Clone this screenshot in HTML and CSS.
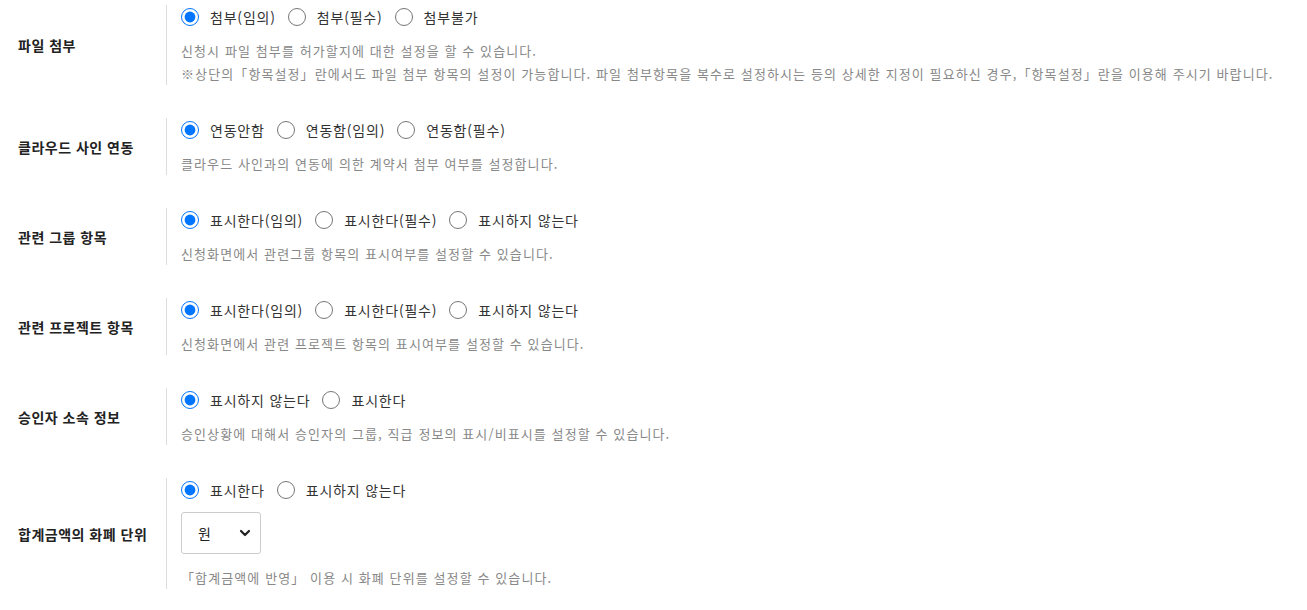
FILE: index.html
```html
<!DOCTYPE html>
<html lang="ko">
<head>
    <meta charset="UTF-8">
    <meta name="viewport" content="width=device-width, initial-scale=1.0">
    <title>신청 설정</title>
    <link rel="stylesheet" href="styles.css">
</head>
<body>
    <div class="settings">
        <!-- 파일 첨부 -->
        <div class="setting-row">
            <div class="setting-label">파일 첨부</div>
            <div class="setting-body">
                <div class="radio-group">
                    <label class="radio"><input type="radio" name="attach" checked>첨부(임의)</label>
                    <label class="radio"><input type="radio" name="attach">첨부(필수)</label>
                    <label class="radio"><input type="radio" name="attach">첨부불가</label>
                </div>
                <p class="setting-desc">신청시 파일 첨부를 허가할지에 대한 설정을 할 수 있습니다.<br>※상단의「항목설정」란에서도 파일 첨부 항목의 설정이 가능합니다. 파일 첨부항목을 복수로 설정하시는 등의 상세한 지정이 필요하신 경우,「항목설정」란을 이용해 주시기 바랍니다.</p>
            </div>
        </div>

        <!-- 클라우드 사인 연동 -->
        <div class="setting-row">
            <div class="setting-label">클라우드 사인 연동</div>
            <div class="setting-body">
                <div class="radio-group">
                    <label class="radio"><input type="radio" name="cloudsign" checked>연동안함</label>
                    <label class="radio"><input type="radio" name="cloudsign">연동함(임의)</label>
                    <label class="radio"><input type="radio" name="cloudsign">연동함(필수)</label>
                </div>
                <p class="setting-desc">클라우드 사인과의 연동에 의한 계약서 첨부 여부를 설정합니다.</p>
            </div>
        </div>

        <!-- 관련 그룹 항목 -->
        <div class="setting-row">
            <div class="setting-label">관련 그룹 항목</div>
            <div class="setting-body">
                <div class="radio-group">
                    <label class="radio"><input type="radio" name="group" checked>표시한다(임의)</label>
                    <label class="radio"><input type="radio" name="group">표시한다(필수)</label>
                    <label class="radio"><input type="radio" name="group">표시하지 않는다</label>
                </div>
                <p class="setting-desc">신청화면에서 관련그룹 항목의 표시여부를 설정할 수 있습니다.</p>
            </div>
        </div>

        <!-- 관련 프로젝트 항목 -->
        <div class="setting-row">
            <div class="setting-label">관련 프로젝트 항목</div>
            <div class="setting-body">
                <div class="radio-group">
                    <label class="radio"><input type="radio" name="project" checked>표시한다(임의)</label>
                    <label class="radio"><input type="radio" name="project">표시한다(필수)</label>
                    <label class="radio"><input type="radio" name="project">표시하지 않는다</label>
                </div>
                <p class="setting-desc">신청화면에서 관련 프로젝트 항목의 표시여부를 설정할 수 있습니다.</p>
            </div>
        </div>

        <!-- 승인자 소속 정보 -->
        <div class="setting-row">
            <div class="setting-label">승인자 소속 정보</div>
            <div class="setting-body">
                <div class="radio-group">
                    <label class="radio"><input type="radio" name="approver" checked>표시하지 않는다</label>
                    <label class="radio"><input type="radio" name="approver">표시한다</label>
                </div>
                <p class="setting-desc">승인상황에 대해서 승인자의 그룹, 직급 정보의 표시/비표시를 설정할 수 있습니다.</p>
            </div>
        </div>

        <!-- 합계금액의 화폐 단위 -->
        <div class="setting-row">
            <div class="setting-label">합계금액의 화폐 단위</div>
            <div class="setting-body">
                <div class="radio-group">
                    <label class="radio"><input type="radio" name="currency" checked>표시한다</label>
                    <label class="radio"><input type="radio" name="currency">표시하지 않는다</label>
                </div>
                <div class="select-box">
                    <select class="currency-select">
                        <option>원</option>
                        <option>달러</option>
                        <option>엔</option>
                    </select>
                    <svg class="select-arrow" width="12" height="8" viewBox="0 0 12 8">
                        <path d="M2 2 L6 6 L10 2" fill="none" stroke="#222" stroke-width="2.2" stroke-linecap="round" stroke-linejoin="round"/>
                    </svg>
                </div>
                <p class="setting-desc">「합계금액에 반영」 이용 시 화폐 단위를 설정할 수 있습니다.</p>
            </div>
        </div>
    </div>
</body>
</html>
```

FILE: styles.css
```css
body {
    margin: 0;
    padding: 5px 0 0;
    font-family: "Noto Sans CJK KR", "Noto Sans", sans-serif;
    color: #333;
    background: #fff;
}
.settings {
    display: flex;
    flex-direction: column;
    gap: 33px;
}
.setting-row {
    display: flex;
    align-items: center;
}
.setting-label {
    width: 166px;
    padding-left: 18px;
    box-sizing: border-box;
    font-size: 14px;
    font-weight: bold;
    letter-spacing: 0.5px;
    color: #222;
}
.setting-body {
    border-left: 1px solid #ddd;
    padding-left: 14px;
}
.radio-group {
    display: flex;
    align-items: center;
    height: 24px;
}
.radio {
    display: flex;
    align-items: center;
    margin-right: 12px;
    font-size: 14px;
    letter-spacing: 0.8px;
    color: #333;
}
.radio input {
    width: 18px;
    height: 18px;
    margin: 0 11px 0 0;
}
.setting-desc {
    margin: 10px 0 0;
    font-size: 13px;
    line-height: 23px;
    letter-spacing: 1.1px;
    color: #888;
}
.select-box {
    position: relative;
    width: 80px;
    margin: 10px 0 12px;
}
.currency-select {
    display: block;
    appearance: none;
    width: 80px;
    height: 42px;
    padding: 0 0 0 16px;
    border: 1px solid #ccc;
    border-radius: 3px;
    background: #fff;
    font-family: inherit;
    font-size: 14px;
    color: #222;
}
.select-arrow {
    position: absolute;
    right: 10px;
    top: 17px;
    pointer-events: none;
}
```
